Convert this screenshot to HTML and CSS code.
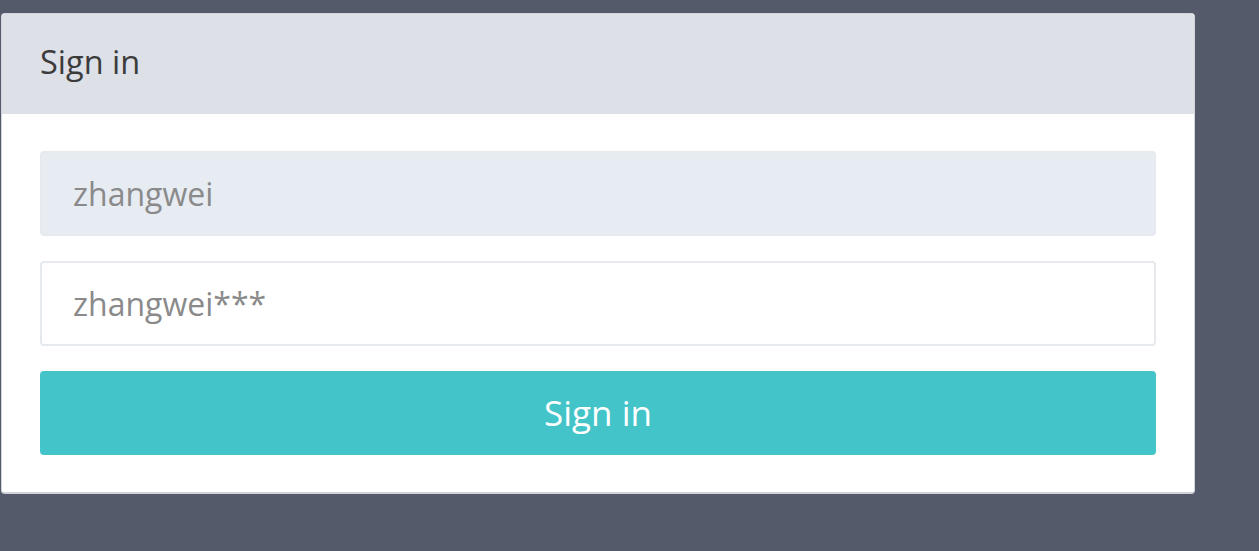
FILE: index.html
```html
<!DOCTYPE html>
<html>
<head>
<meta charset="utf-8">
<link rel="stylesheet" href="styles.css">
</head>
<body>
<div class="card">
  <div class="card-header">Sign in</div>
  <form class="card-body">
    <input class="field field-filled" type="text" value="zhangwei">
    <input class="field" type="text" value="zhangwei***">
    <button class="btn" type="button">Sign in</button>
  </form>
</div>
</body>
</html>
```
FILE: styles.css
```css
html, body {
  margin: 0;
  padding: 0;
  background: #555a6b;
  height: 100%;
}
body {
  font-family: "Open Sans", "Liberation Sans", sans-serif;
  padding-top: 13px;
  padding-left: 1px;
  box-sizing: border-box;
}
.card {
  width: 1194px;
  background: #fff;
  border: 1px solid #d3d6dd;
  border-bottom: 2px solid #cfd2d9;
  border-radius: 4px;
  box-sizing: border-box;
  overflow: hidden;
}
.card-header {
  height: 100px;
  background: #dde0e7;
  color: #3b3b3b;
  font-size: 32.5px;
  display: flex;
  align-items: center;
  padding-left: 38px;
  padding-bottom: 6px;
  box-sizing: border-box;
}
.card-body {
  margin: 0;
  padding: 37px 38px 37px;
  display: flex;
  flex-direction: column;
  gap: 25px;
}
.field {
  height: 85px;
  border: 2px solid #e6e9ee;
  border-radius: 4px;
  background: #fff;
  font-family: inherit;
  font-size: 32px;
  color: #8a8a8a;
  padding: 0 31px;
  box-sizing: border-box;
  outline: none;
}
.field-filled {
  background: #e7ebf2;
}
.btn {
  height: 84px;
  border: none;
  border-radius: 4px;
  background: #43c4c8;
  color: #fff;
  font-family: inherit;
  font-size: 35px;
  padding-bottom: 2px;
  cursor: pointer;
}
```
